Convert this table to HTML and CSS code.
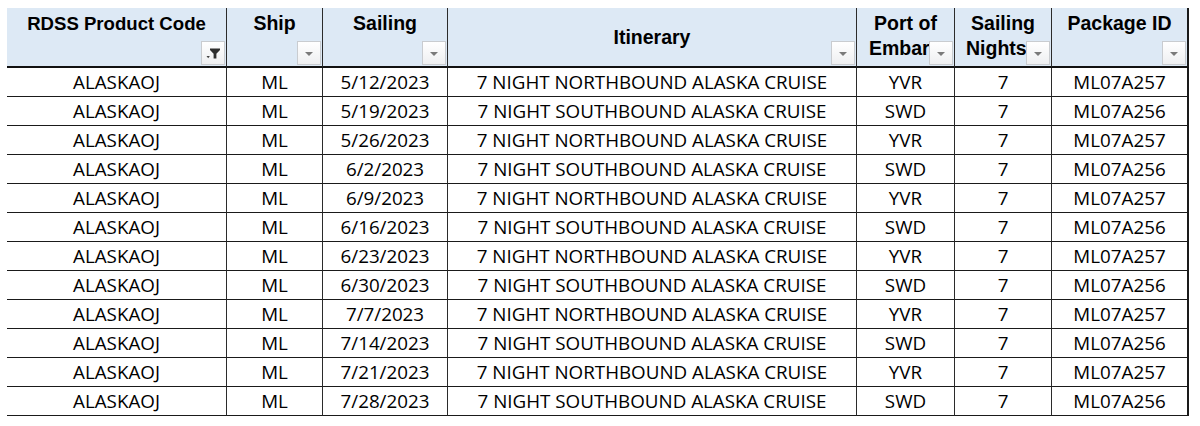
FILE: index.html
```html
<!DOCTYPE html>
<html>
<head>
<meta charset="utf-8">
<link rel="stylesheet" href="styles.css">
</head>
<body>
<table class="sheet">
  <colgroup>
    <col class="c1"><col class="c2"><col class="c3"><col class="c4"><col class="c5"><col class="c6"><col class="c7">
  </colgroup>
  <thead>
    <tr>
      <th class="top code">RDSS Product Code
        <span class="fbtn"><svg width="22" height="22" viewBox="0 0 22 22"><path d="M8 6.5h10v1.4l-3.6 3.8v4.8h-2.8v-4.8L8 7.9z" fill="#2e2e2e"/><path d="M4.5 14h3.4l-1.7 2.2z" fill="#444"/></svg></span>
      </th>
      <th class="top">Ship<span class="fbtn"><i class="tri"></i></span></th>
      <th class="top">Sailing<span class="fbtn"><i class="tri"></i></span></th>
      <th class="mid">Itinerary<span class="fbtn"><i class="tri"></i></span></th>
      <th class="top"><span class="l1">Port of</span><span class="l2">Embar</span><span class="fbtn"><i class="tri"></i></span></th>
      <th class="top"><span class="l1">Sailing</span><span class="l2 l2n">Nights</span><span class="fbtn"><i class="tri"></i></span></th>
      <th class="top last">Package ID<span class="fbtn"><i class="tri"></i></span></th>
    </tr>
  </thead>
  <tbody>
    <tr><td>ALASKAOJ</td><td>ML</td><td>5/12/2023</td><td>7 NIGHT NORTHBOUND ALASKA CRUISE</td><td>YVR</td><td>7</td><td class="last">ML07A257</td></tr>
    <tr><td>ALASKAOJ</td><td>ML</td><td>5/19/2023</td><td>7 NIGHT SOUTHBOUND ALASKA CRUISE</td><td>SWD</td><td>7</td><td class="last">ML07A256</td></tr>
    <tr><td>ALASKAOJ</td><td>ML</td><td>5/26/2023</td><td>7 NIGHT NORTHBOUND ALASKA CRUISE</td><td>YVR</td><td>7</td><td class="last">ML07A257</td></tr>
    <tr><td>ALASKAOJ</td><td>ML</td><td>6/2/2023</td><td>7 NIGHT SOUTHBOUND ALASKA CRUISE</td><td>SWD</td><td>7</td><td class="last">ML07A256</td></tr>
    <tr><td>ALASKAOJ</td><td>ML</td><td>6/9/2023</td><td>7 NIGHT NORTHBOUND ALASKA CRUISE</td><td>YVR</td><td>7</td><td class="last">ML07A257</td></tr>
    <tr><td>ALASKAOJ</td><td>ML</td><td>6/16/2023</td><td>7 NIGHT SOUTHBOUND ALASKA CRUISE</td><td>SWD</td><td>7</td><td class="last">ML07A256</td></tr>
    <tr><td>ALASKAOJ</td><td>ML</td><td>6/23/2023</td><td>7 NIGHT NORTHBOUND ALASKA CRUISE</td><td>YVR</td><td>7</td><td class="last">ML07A257</td></tr>
    <tr><td>ALASKAOJ</td><td>ML</td><td>6/30/2023</td><td>7 NIGHT SOUTHBOUND ALASKA CRUISE</td><td>SWD</td><td>7</td><td class="last">ML07A256</td></tr>
    <tr><td>ALASKAOJ</td><td>ML</td><td>7/7/2023</td><td>7 NIGHT NORTHBOUND ALASKA CRUISE</td><td>YVR</td><td>7</td><td class="last">ML07A257</td></tr>
    <tr><td>ALASKAOJ</td><td>ML</td><td>7/14/2023</td><td>7 NIGHT SOUTHBOUND ALASKA CRUISE</td><td>SWD</td><td>7</td><td class="last">ML07A256</td></tr>
    <tr><td>ALASKAOJ</td><td>ML</td><td>7/21/2023</td><td>7 NIGHT NORTHBOUND ALASKA CRUISE</td><td>YVR</td><td>7</td><td class="last">ML07A257</td></tr>
    <tr><td>ALASKAOJ</td><td>ML</td><td>7/28/2023</td><td>7 NIGHT SOUTHBOUND ALASKA CRUISE</td><td>SWD</td><td>7</td><td class="last">ML07A256</td></tr>
  </tbody>
</table>
</body>
</html>
```
FILE: styles.css
```css
html, body {
  margin: 0;
  padding: 0;
  background: #ffffff;
}

.sheet {
  margin: 8px 0 0 7px;
  border-collapse: separate;
  border-spacing: 0;
  table-layout: fixed;
  width: 1182px;
}

.c1 { width: 220px; }
.c2 { width: 96px; }
.c3 { width: 125px; }
.c4 { width: 409px; }
.c5 { width: 98px; }
.c6 { width: 97px; }
.c7 { width: 137px; }

.sheet th {
  position: relative;
  height: 60px;
  padding: 0;
  background: #dde9f5;
  border-right: 1px solid #2b2b2b;
  border-bottom: 2px solid #111111;
  font-family: "Liberation Sans", Arial, sans-serif;
  font-weight: bold;
  font-size: 19.5px;
  line-height: 25px;
  color: #000000;
  text-align: center;
  overflow: hidden;
  box-sizing: border-box;
}

.sheet th.top {
  vertical-align: top;
  padding-top: 3px;
}

.sheet th.mid {
  vertical-align: middle;
  padding-top: 0;
}

.sheet th.code {
  font-size: 18.6px;
}

.sheet th.last,
.sheet td.last {
  border-right: 2px solid #1a1a1a;
}

.l1 {
  display: block;
  white-space: nowrap;
}

.l2 {
  display: block;
  text-align: left;
  padding-left: 12px;
  white-space: nowrap;
}

.l2n {
  padding-left: 11px;
}

.fbtn {
  position: absolute;
  right: 1px;
  bottom: 1px;
  width: 24px;
  height: 24px;
  box-sizing: border-box;
  border: 1px solid #c9ccd0;
  background: linear-gradient(#ffffff, #eeeff1);
  display: flex;
  align-items: center;
  justify-content: center;
}

.fbtn svg {
  display: block;
}

.tri {
  display: block;
  width: 0;
  height: 0;
  border-left: 4px solid transparent;
  border-right: 4px solid transparent;
  border-top: 4px solid #7a7a7a;
  margin-top: 2px;
}

.sheet td {
  height: 28px;
  padding: 0;
  border-right: 1px solid #2b2b2b;
  border-bottom: 1px solid #1a1a1a;
  font-family: "Open Sans", "Liberation Sans", sans-serif;
  font-size: 18.8px;
  line-height: 28px;
  color: #000000;
  text-align: center;
  white-space: nowrap;
  overflow: hidden;
}
```
